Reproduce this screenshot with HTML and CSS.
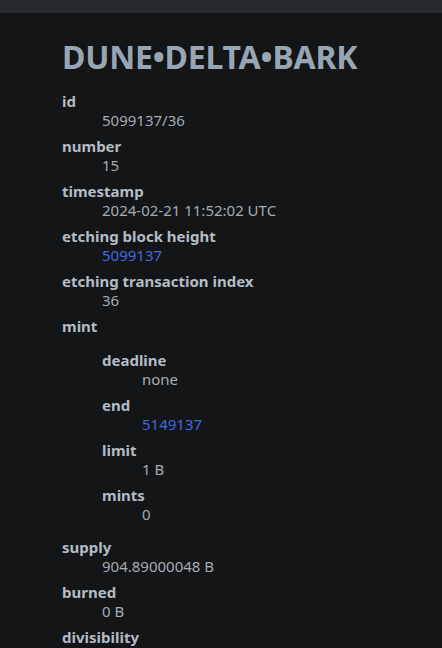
FILE: index.html
```html
<!DOCTYPE html>
<html>
<head>
<meta charset="utf-8">
<link rel="stylesheet" href="styles.css">
</head>
<body>
<header class="topbar"></header>
<main class="content">
  <h1 class="title">DUNE•DELTA•BARK</h1>
  <dl class="fields">
    <dt>id</dt>
    <dd>5099137/36</dd>
    <dt>number</dt>
    <dd>15</dd>
    <dt>timestamp</dt>
    <dd>2024-02-21 11:52:02 UTC</dd>
    <dt>etching block height</dt>
    <dd><a href="#">5099137</a></dd>
    <dt>etching transaction index</dt>
    <dd>36</dd>
    <dt>mint</dt>
    <dd>
      <dl class="fields nested">
        <dt>deadline</dt>
        <dd>none</dd>
        <dt>end</dt>
        <dd><a href="#">5149137</a></dd>
        <dt>limit</dt>
        <dd>1 B</dd>
        <dt>mints</dt>
        <dd>0</dd>
      </dl>
    </dd>
    <dt>supply</dt>
    <dd>904.89000048 B</dd>
    <dt>burned</dt>
    <dd>0 B</dd>
    <dt>divisibility</dt>
    <dd>0</dd>
    <dt>symbol</dt>
    <dd>¤</dd>
  </dl>
</main>
</body>
</html>
```

FILE: styles.css
```css
html, body {
  margin: 0;
  padding: 0;
  background: #131516;
}
body {
  font-family: "Noto Sans", "Open Sans", sans-serif;
  color: #a3acb5;
  font-size: 15px;
  line-height: 19px;
}
.topbar {
  height: 13px;
  background: #26292c;
}
.content {
  padding: 0 20px 0 62px;
}
.title {
  margin: 22px 0 13px;
  font-size: 32px;
  line-height: 44px;
  font-weight: 700;
  color: #98a5b5;
  letter-spacing: -0.2px;
}
.fields {
  margin: 0;
}
.fields dt {
  font-weight: 700;
  color: #b3bcc5;
  margin-top: 7px;
}
.fields dt:first-child {
  margin-top: 0;
}
.fields dd {
  margin: 0 0 0 40px;
}
.fields .nested {
  margin: 15px 0 14px 0;
}
.fields .nested dd {
  margin-left: 40px;
}
a {
  color: #4169e1;
  text-decoration: none;
}
```
